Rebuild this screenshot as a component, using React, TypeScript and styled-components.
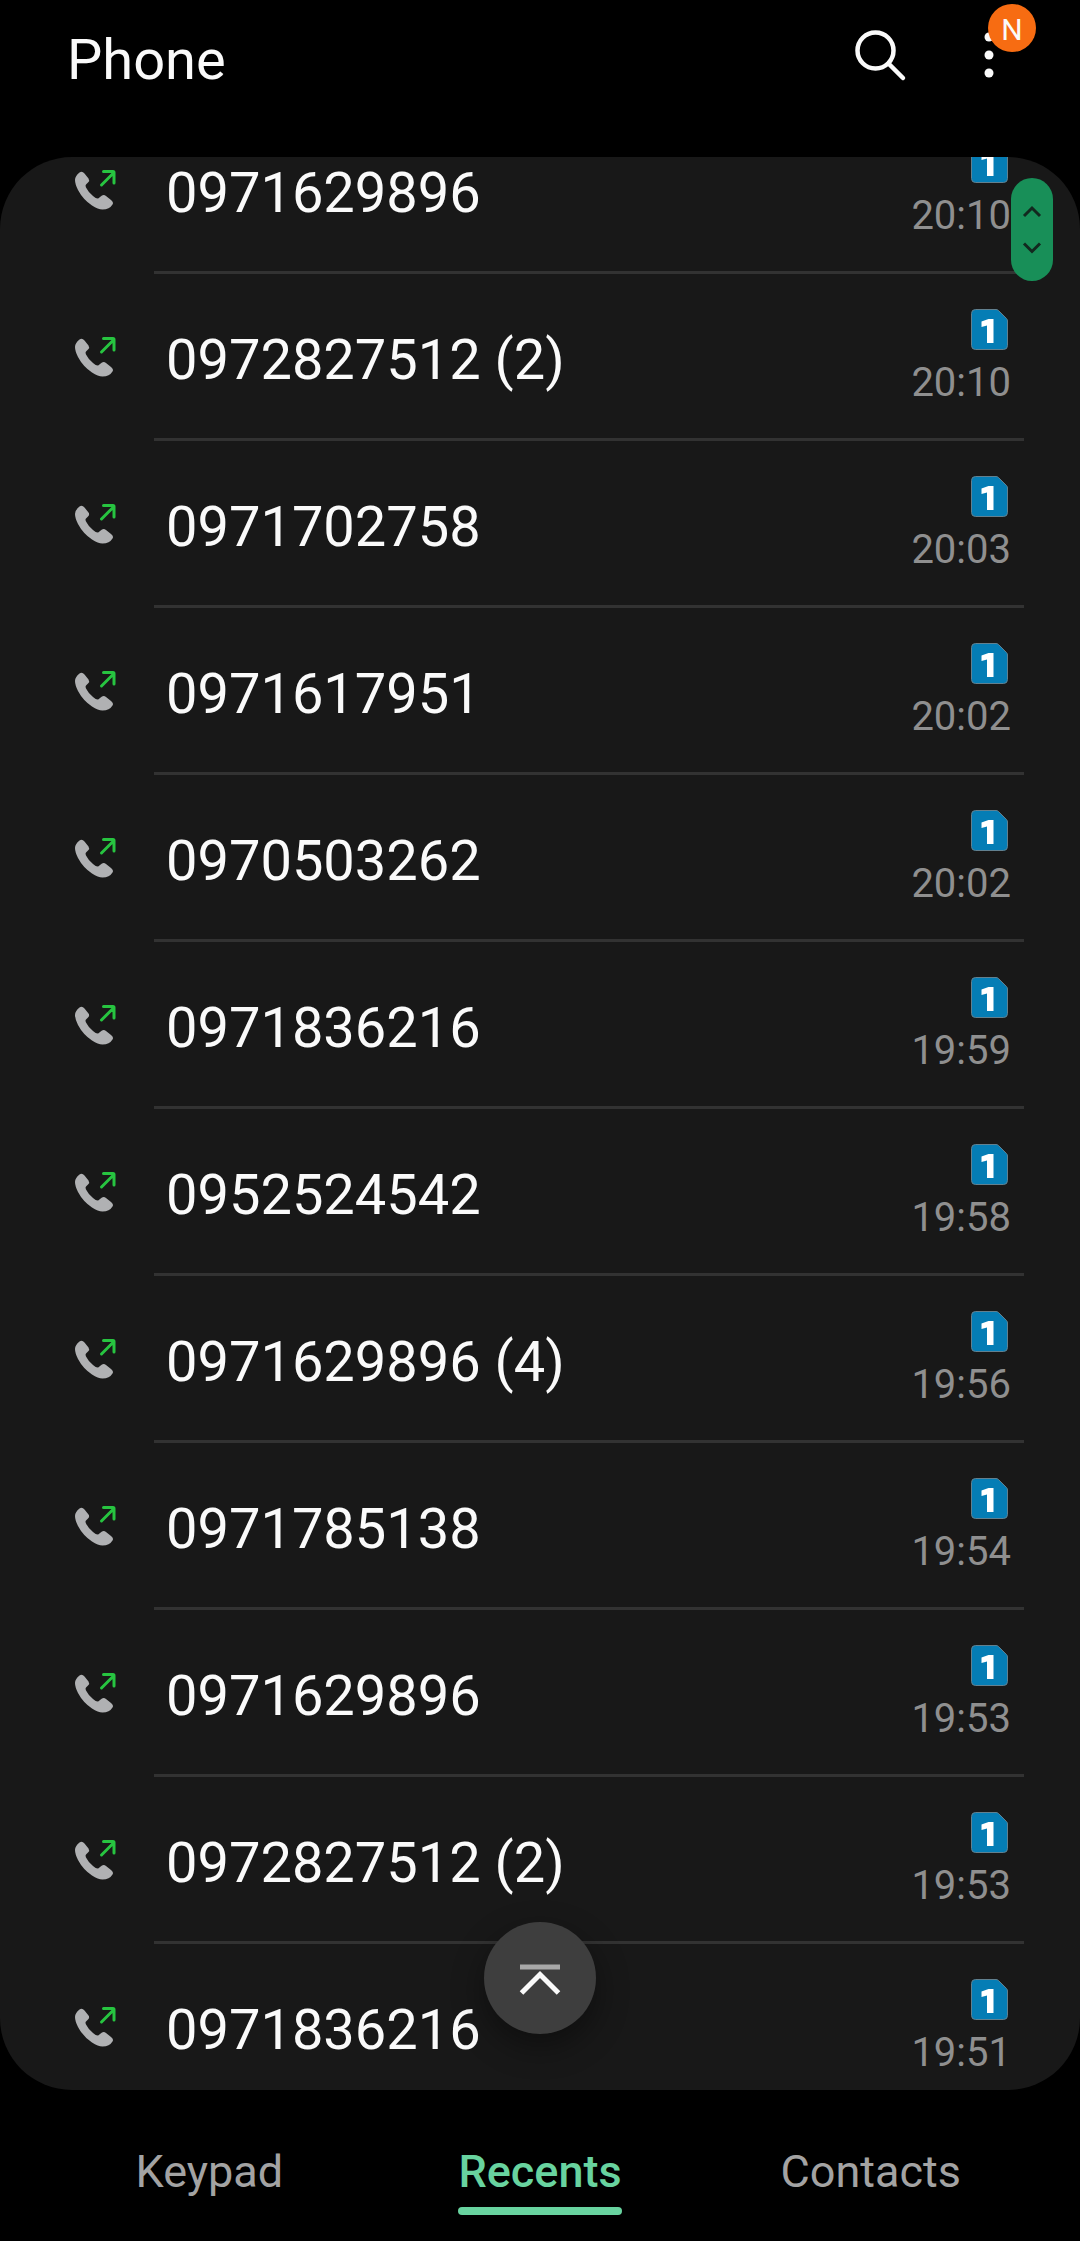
import React from "react";
import styled, { createGlobalStyle, css } from "styled-components";

const GlobalStyle = createGlobalStyle`
  * { box-sizing: border-box; }
  body {
    margin: 0;
    background: #000;
    color: #fafafa;
    font-family: Roboto, "Noto Sans", sans-serif;
  }
  button {
    margin: 0;
    padding: 0;
    border: 0;
    background: none;
    color: inherit;
    font: inherit;
    cursor: pointer;
  }
  svg { display: block; }
`;

const Screen = styled.div`
  display: flex;
  flex-direction: column;
  height: 100vh;
`;

const Header = styled.header`
  display: flex;
  flex: none;
  align-items: flex-start;
  justify-content: space-between;
  padding: 20px 56px 57px 67px;
`;

const Title = styled.h1`
  margin: 0;
  padding-top: 8px;
  font-size: 56px;
  font-weight: 400;
  line-height: 64px;
`;

const Actions = styled.div`
  display: flex;
  gap: 24px;
`;

const IconButton = styled.button`
  position: relative;
  display: grid;
  place-items: center;
  width: 80px;
  height: 80px;
`;

const Badge = styled.span`
  position: absolute;
  top: -16px;
  right: -12px;
  display: grid;
  place-items: center;
  width: 48px;
  height: 48px;
  padding-top: 4px;
  border-radius: 50%;
  background: #f76c12;
  font-size: 30px;
  line-height: 32px;
`;

const Panel = styled.main`
  position: relative;
  flex: 1;
  min-height: 0;
  overflow: hidden;
  border-radius: 72px;
  background: #181818;
`;

const CallList = styled.ul`
  margin: -50px 0 0;
  padding: 0;
  list-style: none;
`;

const CallRow = styled.li`
  display: flex;
  height: 167px;
  padding: 0 56px 0 72px;
`;

const CallIcon = styled.span`
  flex: none;
  width: 82px;
  padding-top: 60px;
`;

const CallBody = styled.div`
  display: flex;
  flex: 1;
  justify-content: space-between;
  padding: 0 13px 0 12px;
  border-bottom: 3px solid #323232;
`;

const PhoneNumber = styled.span`
  padding-top: 54px;
  font-size: 56px;
  line-height: 64px;
`;

const CallMeta = styled.div`
  display: flex;
  flex-direction: column;
  align-items: flex-end;
  padding-top: 35px;
`;

const SimBadge = styled.span`
  display: block;
  margin-right: 3px;
`;

const CallTime = styled.time`
  margin-top: 9px;
  color: #8f8f8f;
  font-size: 40px;
  line-height: 48px;
`;

const ScrollHandle = styled.button`
  && {
    position: absolute;
    top: 21px;
    right: 27px;
    width: 42px;
    height: 103px;
    border-radius: 21px;
    background: #188f58;
  }
`;

const TopButton = styled.button`
  && {
    position: absolute;
    bottom: 56px;
    left: calc(50% - 56px);
    display: grid;
    place-items: center;
    width: 112px;
    height: 112px;
    border-radius: 50%;
    background: #3e3e3e;
    box-shadow: 0 12px 32px rgba(0, 0, 0, 0.4);
  }
`;

const TabBar = styled.nav`
  display: flex;
  flex: none;
  padding: 54px 44px 26px;
`;

const Tab = styled.button<{ $active?: boolean }>`
  && {
    display: flex;
    flex: 1;
    justify-content: center;
    color: #a3a3a3;
    font-size: 45px;
    line-height: 56px;
    ${(p) =>
      p.$active &&
      css`
        color: #68d39f;
        font-weight: 500;
      `}
  }
`;

const TabLabel = styled.span<{ $active?: boolean }>`
  display: flex;
  flex-direction: column;
  gap: 7px;
  &::after {
    content: "";
    height: 8px;
    border-radius: 4px;
    background: ${(p) => (p.$active ? "#68d39f" : "transparent")};
  }
`;

const calls = [
  { number: "0971629896", time: "20:10" },
  { number: "0972827512", count: 2, time: "20:10" },
  { number: "0971702758", time: "20:03" },
  { number: "0971617951", time: "20:02" },
  { number: "0970503262", time: "20:02" },
  { number: "0971836216", time: "19:59" },
  { number: "0952524542", time: "19:58" },
  { number: "0971629896", count: 4, time: "19:56" },
  { number: "0971785138", time: "19:54" },
  { number: "0971629896", time: "19:53" },
  { number: "0972827512", count: 2, time: "19:53" },
  { number: "0971836216", time: "19:51" },
];

const tabs = ["Keypad", "Recents", "Contacts"];

function OutgoingCall() {
  return (
    <svg width="46" height="46" viewBox="0 0 46 46" role="img" aria-label="Outgoing call">
      <path
        d="M7.500 5.500 Q10 3.500 12.500 6.500 L16.500 11.500 Q18 13.500 16 15.500 L14 17.500 Q13 18.500 14 20.500 Q16.500 25.500 21 29 Q24 31.500 25.500 31.500 Q26.500 31.500 28 30 L30 28.500 Q32 27.300 34 29 L39 33 Q42 35.500 40.500 37.500 Q37.500 42.500 30.500 42.500 Q26 42.500 20 38.500 Q11 32.500 6 23 Q3 17 3 13 Q3 9 7.500 5.500 Z"
        fill="#b0b1b3"
      />
      <path
        d="M29.500 18 L41.500 6 M31.500 4.500 H41 Q42 4.500 42 5.500 V16"
        fill="none"
        stroke="#27c440"
        strokeWidth="3"
        strokeLinecap="round"
      />
    </svg>
  );
}

function SimCard() {
  return (
    <svg width="37" height="41" viewBox="0 0 37 41" role="img" aria-label="SIM 1">
      <path
        d="M4.500 .5 H25 Q26.500 .5 27.500 1.500 L35.500 9.500 Q36.500 10.500 36.500 12 V36.500 Q36.500 40.500 32.500 40.500 H4.500 Q.5 40.500 .5 36.500 V4.500 Q.5 .5 4.500 .5 Z"
        fill="#057db5"
        stroke="#62808f"
      />
      <path d="M17.500 10 H22.500 V34 H16 V16.500 L10.500 18 V12.500 Z" fill="#fff" />
    </svg>
  );
}

export default function App() {
  return (
    <>
      <GlobalStyle />
      <Screen>
        <Header>
          <Title>Phone</Title>
          <Actions>
            <IconButton aria-label="Search">
              <svg width="64" height="64" viewBox="0 0 64 64" fill="none" stroke="#fafafa" strokeWidth="4.5" strokeLinecap="round">
                <circle cx="27.500" cy="22.500" r="18" />
                <path d="M41 36 L55 50" />
              </svg>
            </IconButton>
            <IconButton aria-label="More options, new">
              <svg width="56" height="56" viewBox="0 0 56 56" fill="#fafafa">
                <circle cx="33" cy="5" r="4.500" />
                <circle cx="33" cy="23" r="4.500" />
                <circle cx="33" cy="41" r="4.500" />
              </svg>
              <Badge>N</Badge>
            </IconButton>
          </Actions>
        </Header>
        <Panel>
          <CallList>
            {calls.map((call, i) => (
              <CallRow key={i}>
                <CallIcon>
                  <OutgoingCall />
                </CallIcon>
                <CallBody>
                  <PhoneNumber>
                    {call.count ? `${call.number} (${call.count})` : call.number}
                  </PhoneNumber>
                  <CallMeta>
                    <SimBadge>
                      <SimCard />
                    </SimBadge>
                    <CallTime>{call.time}</CallTime>
                  </CallMeta>
                </CallBody>
              </CallRow>
            ))}
          </CallList>
          <ScrollHandle aria-label="Scroll">
            <svg width="42" height="103" viewBox="0 0 42 103" fill="none" stroke="#12291f" strokeWidth="3">
              <path d="M13 38 L21 30 L29 38 M13 65.500 L21 73.500 L29 65.500" />
            </svg>
          </ScrollHandle>
          <TopButton aria-label="Go to top">
            <svg width="56" height="56" viewBox="0 0 56 56" fill="none">
              <path d="M8 17 H48" stroke="#a8a8a8" strokeWidth="5" />
              <path d="M9.500 43 L28 24.500 L46.500 43" stroke="#fafafa" strokeWidth="5" />
            </svg>
          </TopButton>
        </Panel>
        <TabBar>
          {tabs.map((tab) => (
            <Tab key={tab} $active={tab === "Recents"}>
              <TabLabel $active={tab === "Recents"}>{tab}</TabLabel>
            </Tab>
          ))}
        </TabBar>
      </Screen>
    </>
  );
}
